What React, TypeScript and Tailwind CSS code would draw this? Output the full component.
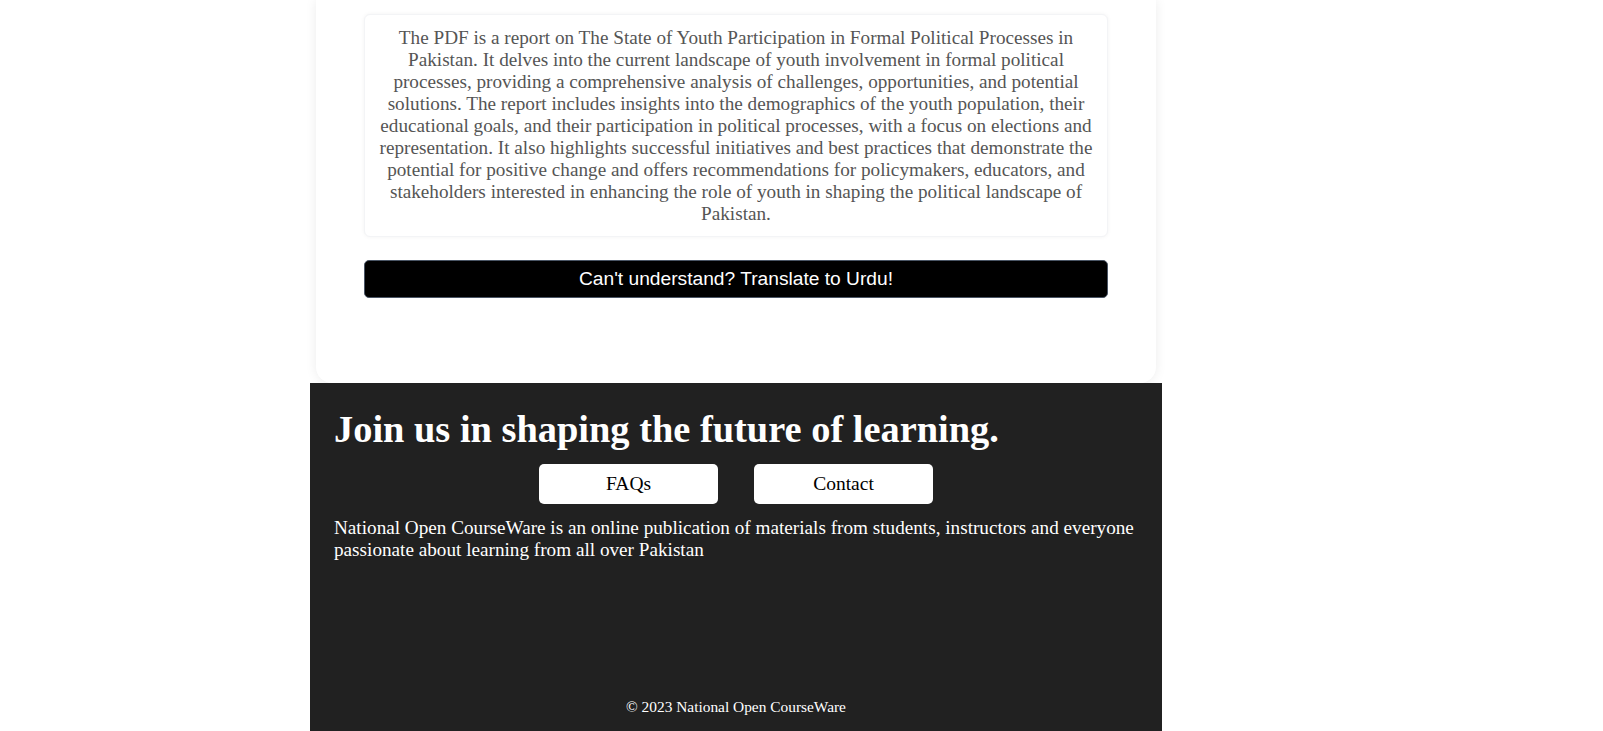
import React from 'react';

const summary =
  'The PDF is a report on The State of Youth Participation in Formal Political Processes in Pakistan. It delves into the current landscape of youth involvement in formal political processes, providing a comprehensive analysis of challenges, opportunities, and potential solutions. The report includes insights into the demographics of the youth population, their educational goals, and their participation in political processes, with a focus on elections and representation. It also highlights successful initiatives and best practices that demonstrate the potential for positive change and offers recommendations for policymakers, educators, and stakeholders interested in enhancing the role of youth in shaping the political landscape of Pakistan.';

export default function App() {
  return (
    <div className="min-h-screen bg-white font-['Liberation_Serif',serif]">
      <div className="ml-[310px] w-[852px]">
        {/* summary panel */}
        <div className="mx-[6px] rounded-b-2xl bg-white px-12 pt-[14px] pb-[85px] shadow-[0_0_12px_rgba(0,0,0,0.08)]">
          <div className="rounded-md border border-gray-100 bg-white px-3 pt-3 pb-[11px] text-center text-[19.2px] leading-[22px] text-[#555] shadow-[0_0_4px_rgba(0,0,0,0.05)]">
            {summary}
          </div>
          <button className="mt-[23px] flex h-[38px] w-full items-center justify-center rounded-[5px] border border-gray-600 bg-black font-['Liberation_Sans',sans-serif] text-[19.2px] text-white">
            Can't understand? Translate to Urdu!
          </button>
        </div>

        {/* footer */}
        <footer className="bg-[#212121] px-6 pt-[23px] pb-[40px] text-white">
          <h1 className="text-[38.4px] font-bold leading-[46px]">Join us in shaping the future of learning.</h1>
          <div className="mt-[12px] flex justify-center gap-[36px]">
            <button className="h-[40px] w-[179px] rounded-[5px] bg-white text-[19.5px] text-black">FAQs</button>
            <button className="h-[40px] w-[179px] rounded-[5px] bg-white text-[19.5px] text-black">Contact</button>
          </div>
          <p className="mt-[13px] text-[19.2px] leading-[22px]">
            National Open CourseWare is an online publication of materials from students, instructors and everyone
            passionate about learning from all over Pakistan
          </p>
          <p className="mt-[137px] text-center text-[15.4px] leading-[18px]">© 2023 National Open CourseWare</p>
        </footer>
      </div>
    </div>
  );
}
